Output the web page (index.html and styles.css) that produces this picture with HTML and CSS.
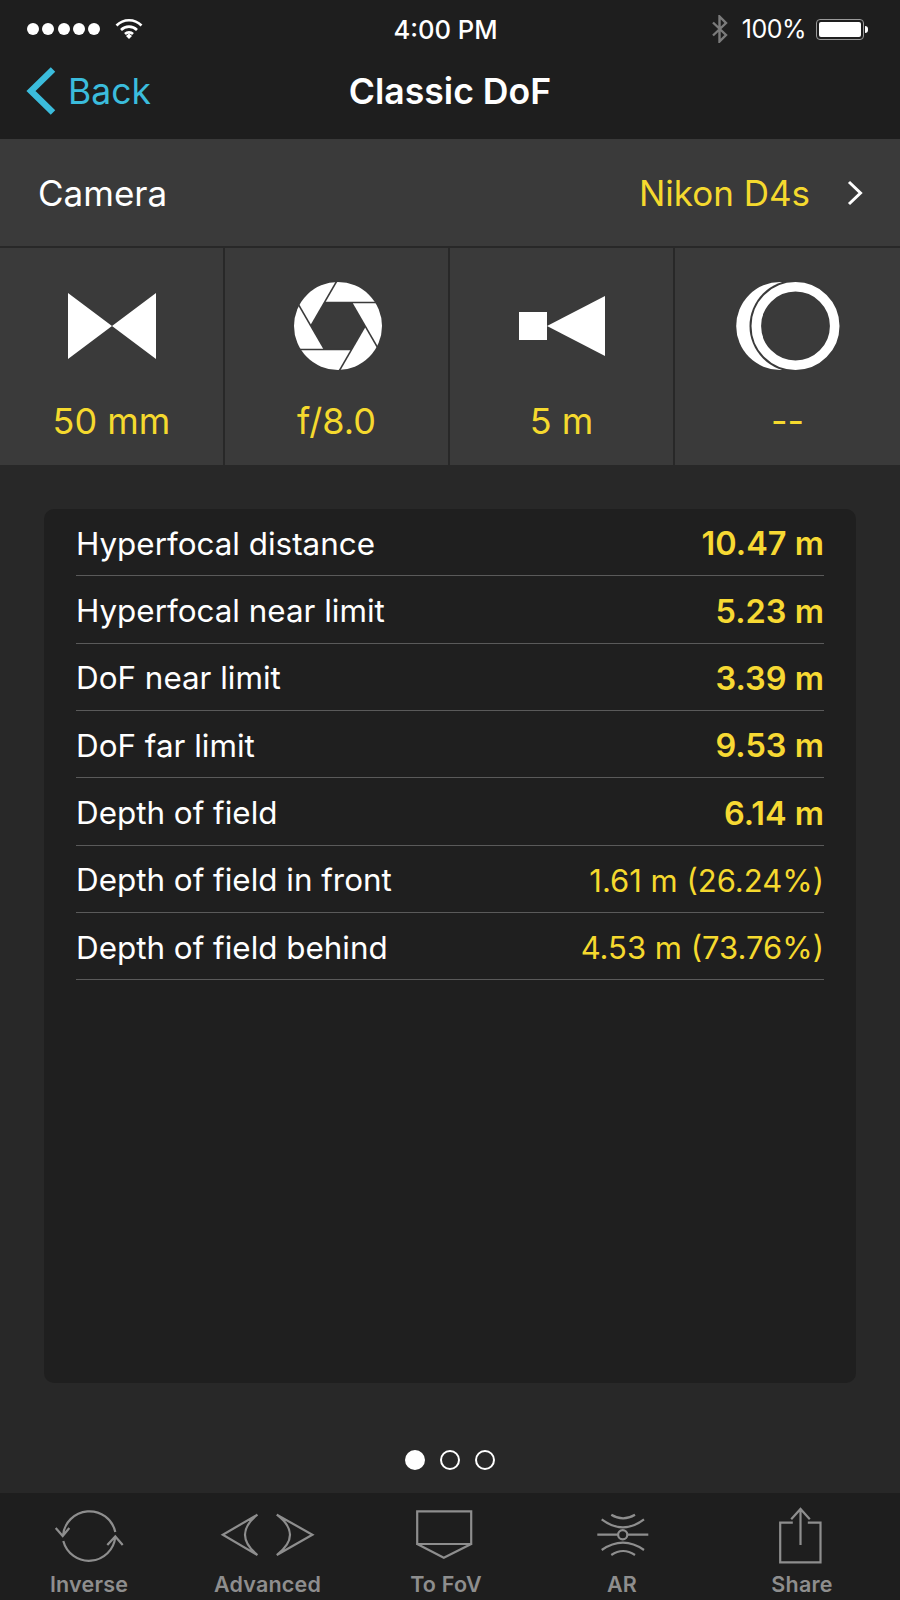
FILE: index.html
```html
<!DOCTYPE html>
<html lang="en">
<head>
  <meta charset="UTF-8">
  <meta name="viewport" content="width=device-width, initial-scale=1.0">
  <title>Classic DoF</title>
  <link rel="stylesheet" href="styles.css">
</head>
<body>
  <div class="page">
    <header class="top">
      <div class="status">
        <div class="status-left">
          <span class="signal"><i></i><i></i><i></i><i></i><i></i></span>
          <svg class="wifi" width="28" height="22" viewBox="0 0 28 22">
            <path d="M1.5 7.5C8.5 0.5 19.5 0.5 26.5 7.5M6 12C10.5 7.5 17.5 7.5 22 12M10 16C12.2 13.8 15.8 13.8 18 16" fill="none" stroke="#fff" stroke-width="2.6"/>
            <path d="M11 18L14 15.6L17 18L14 21Z" fill="#fff"/>
          </svg>
        </div>
        <div class="time">4:00 PM</div>
        <div class="status-right">
          <svg class="bt" width="18" height="28" viewBox="0 0 18 28">
            <path d="M2 7.5L15 20L8.5 26.5V1.5L15 8L2 20.5" fill="none" stroke="#7b7b7b" stroke-width="2.4"/>
          </svg>
          <span class="pct">100%</span>
          <span class="battery"><b></b></span>
        </div>
      </div>
      <nav class="nav">
        <div class="back">
          <svg width="32" height="50" viewBox="0 0 32 50">
            <path d="M28 3.5L6 25L28 46.5" fill="none" stroke="#3bbcdc" stroke-width="6.4"/>
          </svg>
          <span>Back</span>
        </div>
        <h1>Classic DoF</h1>
      </nav>
    </header>

    <div class="camera-row">
      <span class="camera-label">Camera</span>
      <span class="camera-value">Nikon D4s</span>
      <svg class="chev" width="18" height="28" viewBox="0 0 18 28">
        <path d="M3 3L14.5 14L3 25" fill="none" stroke="#fff" stroke-width="3"/>
      </svg>
    </div>

    <div class="tiles">
      <div class="tile">
        <svg width="104" height="92" viewBox="-52 -46 104 92">
          <path d="M-44 -33L0 0L44 -33V33L0 0L-44 33Z" fill="#fff"/>
        </svg>
        <span>50 mm</span>
      </div>
      <div class="tile">
        <svg width="104" height="92" viewBox="-52 -46 104 92">
          <g transform="translate(1 0)">
            <circle r="44" fill="#fff"/>
            <path d="M-13.5 -23.5H13.5L27 0L13.5 23.5H-13.5L-27 0Z" fill="#3a3a3a"/>
            <g stroke="#3a3a3a" stroke-width="1.6">
              <path d="M-13.5 -23.5H40"/>
              <path d="M-13.5 -23.5H40" transform="rotate(60)"/>
              <path d="M-13.5 -23.5H40" transform="rotate(120)"/>
              <path d="M-13.5 -23.5H40" transform="rotate(180)"/>
              <path d="M-13.5 -23.5H40" transform="rotate(240)"/>
              <path d="M-13.5 -23.5H40" transform="rotate(300)"/>
            </g>
          </g>
        </svg>
        <span>f/8.0</span>
      </div>
      <div class="tile">
        <svg width="104" height="92" viewBox="-52 -46 104 92">
          <path d="M-43 -14H-15V14H-43Z" fill="#fff"/>
          <path d="M-15 0L43 -30V30Z" fill="#fff"/>
        </svg>
        <span>5 m</span>
      </div>
      <div class="tile">
        <svg width="104" height="92" viewBox="-52 -46 104 92">
          <circle cx="-7.8" r="44" fill="#fff"/>
          <circle cx="7.5" r="46" fill="#3a3a3a"/>
          <circle cx="7.5" r="39.2" fill="none" stroke="#fff" stroke-width="9.6"/>
        </svg>
        <span>--</span>
      </div>
    </div>

    <main class="main">
      <section class="card">
        <div class="row"><span>Hyperfocal distance</span><strong>10.47 m</strong></div>
        <div class="row"><span>Hyperfocal near limit</span><strong>5.23 m</strong></div>
        <div class="row"><span>DoF near limit</span><strong>3.39 m</strong></div>
        <div class="row"><span>DoF far limit</span><strong>9.53 m</strong></div>
        <div class="row"><span>Depth of field</span><strong>6.14 m</strong></div>
        <div class="row"><span>Depth of field in front</span><em>1.61 m (26.24%)</em></div>
        <div class="row"><span>Depth of field behind</span><em>4.53 m (73.76%)</em></div>
      </section>
      <div class="dots">
        <i class="on"></i><i></i><i></i>
      </div>
    </main>

    <footer class="tabs">
      <div class="tab">
        <svg width="100" height="68" viewBox="0 0 100 68">
          <path d="M24 31A26.5 26.5 0 0 1 76.3 27M24.3 36A26.5 26.5 0 0 0 76.3 32M16.7 23L23.7 31L30.3 23M68.3 40L76.3 31.5L83.7 40"/>
        </svg>
        <span>Inverse</span>
      </div>
      <div class="tab">
        <svg width="100" height="68" viewBox="0 0 100 68">
          <path d="M39.4 9.7L4.8 29.7L39.4 50Q14.6 29.7 39.4 9.7ZM58.8 9.7L94.4 29.7L58.8 50Q85.2 29.7 58.8 9.7Z"/>
        </svg>
        <span>Advanced</span>
      </div>
      <div class="tab">
        <svg width="100" height="68" viewBox="0 0 100 68">
          <path d="M21.2 6.3H75.2V39H21.2ZM21.2 39L47.8 52.7L75.2 39"/>
        </svg>
        <span>To FoV</span>
      </div>
      <div class="tab tab-ar">
        <svg width="100" height="68" viewBox="0 0 100 68">
          <path d="M39.3 9.7Q51 16.9 63 9.7M29.7 14.3Q51 30.3 72 14.3M25.3 29.7H46M55.5 29.7H76.3M29.7 45Q51 30.4 72 45M39.3 50Q51 42 63 50"/>
          <circle cx="50.7" cy="29.7" r="4.6"/>
        </svg>
        <span>AR</span>
      </div>
      <div class="tab">
        <svg width="100" height="68" viewBox="0 0 100 68">
          <path d="M40.8 17.7H28.2V57.3H68.5V17.7H55.8M48.5 40V4M39.2 14.3L48.5 4L57.8 14.3"/>
        </svg>
        <span>Share</span>
      </div>
    </footer>
  </div>
</body>
</html>
```

FILE: styles.css
```css
body {
  margin: 0;
  font-family: Inter, "Liberation Sans", sans-serif;
  background-color: #282828;
  color: white;
}
.page {
  width: 900px;
  height: 1600px;
  display: flex;
  flex-direction: column;
  overflow: hidden;
}

/* status bar + nav */
.top {
  background-color: #1e1e1e;
  height: 139px;
}
.status {
  height: 58px;
  display: grid;
  grid-template-columns: 1fr auto 1fr;
  align-items: center;
  padding: 0 36px 0 27px;
}
.status-left {
  display: flex;
  align-items: center;
  gap: 15px;
}
.signal {
  display: flex;
  gap: 3.3px;
}
.signal i {
  width: 12px;
  height: 12px;
  border-radius: 50%;
  background-color: white;
}
.time {
  font-size: 25.6px;
  font-weight: 500;
}
.status-right {
  display: flex;
  align-items: center;
  justify-content: flex-end;
  gap: 10px;
}
.bt {
  margin-right: 3px;
}
.pct {
  font-size: 25px;
  letter-spacing: -0.5px;
}
.battery {
  position: relative;
  box-sizing: border-box;
  width: 48px;
  height: 21px;
  padding: 2px;
  border: 1px solid #9a9a9a;
  border-radius: 4px;
  display: flex;
}
.battery b {
  flex: 1;
  background-color: white;
  border-radius: 2px;
}
.battery::after {
  content: "";
  position: absolute;
  right: -5px;
  top: 6px;
  width: 3px;
  height: 7px;
  background-color: white;
  border-radius: 0 3px 3px 0;
}
.nav {
  position: relative;
  height: 66px;
  display: flex;
  align-items: center;
  justify-content: center;
}
.nav h1 {
  margin: 0;
  font-size: 35.6px;
  font-weight: 600;
}
.back {
  position: absolute;
  left: 25px;
  top: 8px;
  display: flex;
  align-items: center;
  gap: 11px;
  color: #3bbcdc;
  font-size: 35.5px;
}

/* camera row */
.camera-row {
  height: 107px;
  background-color: #3a3a3a;
  display: flex;
  align-items: center;
  padding: 0 36px 0 38px;
  font-size: 35px;
}
.camera-label {
  flex: 1;
}
.camera-value {
  color: #f5d92e;
}
.chev {
  margin-left: 36px;
}

/* setting tiles */
.tiles {
  margin-top: 2px;
  height: 217px;
  display: grid;
  grid-template-columns: 223px 223px 223px 225px;
  gap: 2px;
}
.tile {
  background-color: #3a3a3a;
  display: flex;
  flex-direction: column;
  align-items: center;
  padding-top: 32px;
  box-sizing: border-box;
  color: #f5d92e;
  font-size: 36px;
}
.tile span {
  margin-top: 27px;
}

/* results */
.main {
  flex: 1;
  padding: 44px 44px 0;
}
.card {
  height: 874px;
  box-sizing: border-box;
  background-color: #1f1f1f;
  border-radius: 10px;
  padding: 0 32px;
}
.row {
  height: 67.35px;
  box-sizing: border-box;
  border-bottom: 1px solid #5a5a5a;
  display: flex;
  align-items: center;
  justify-content: space-between;
  padding-top: 3px;
  font-size: 31.4px;
}
.row strong {
  color: #f7d933;
  font-size: 32.5px;
  font-weight: 600;
}
.row em {
  color: #f5d92e;
  font-size: 31px;
  font-style: normal;
}
.dots {
  margin-top: 67px;
  display: flex;
  justify-content: center;
  gap: 15px;
}
.dots i {
  box-sizing: border-box;
  width: 20px;
  height: 20px;
  border: 2px solid white;
  border-radius: 50%;
}
.dots i.on {
  background-color: white;
}

/* tab bar */
.tabs {
  height: 107px;
  background-color: #1e1e1e;
  display: grid;
  grid-template-columns: 178px 179px 178px 178px 178px;
  color: #8e8e8e;
  font-size: 21.5px;
  font-weight: 600;
  padding-top: 12px;
  box-sizing: border-box;
}
.tab {
  display: flex;
  flex-direction: column;
  align-items: center;
}
.tab-ar {
  padding-right: 4px;
}
.tab svg {
  fill: none;
  stroke: #8e8e8e;
  stroke-width: 2.2;
}
.tab span {
  margin-top: -2px;
  letter-spacing: 0.2px;
}
```
